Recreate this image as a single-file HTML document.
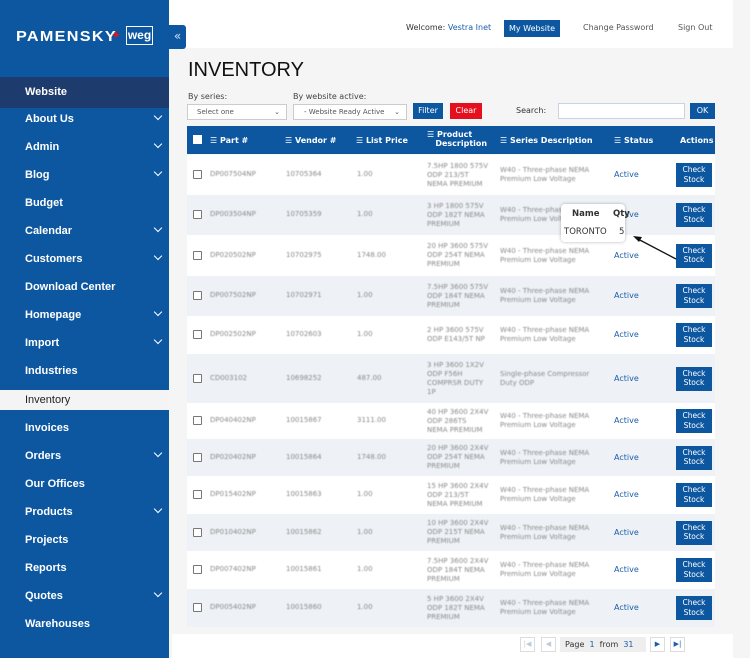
<!DOCTYPE html><html><head><style>
*{margin:0;padding:0;box-sizing:border-box}
body{width:750px;height:658px;overflow:hidden;background:#f5f5f5;font-family:"DejaVu Sans","Liberation Sans",sans-serif;font-size:8px;color:#333;position:relative}
.a{position:absolute}
#sb{left:0;top:0;width:169px;height:658px;background:#0d57a1}
.mi{position:absolute;left:25px;color:#fff;font-size:11px;font-weight:bold;font-family:"Liberation Sans",sans-serif}
.ch{position:absolute;left:155px;width:6px;height:6px;border-right:1.5px solid #fff;border-bottom:1.5px solid #fff;transform:rotate(45deg)}
.bl{color:#8a8a8a;filter:blur(0.6px);font-size:7px;line-height:9px}
.btn{background:#0d57a1;color:#fff;text-align:center}
.cb{position:absolute;left:193px;width:9px;height:9px;border:1px solid #777;background:#fff;border-radius:1px}
</style></head><body>
<div class="a" style="left:169px;top:0;width:564px;height:48px;background:#fff"></div>
<div class="a" style="left:172px;top:634px;width:561px;height:24px;background:#fff"></div>
<div id="sb" class="a">
<div class="a" style="left:16px;top:28px;color:#fff;font:900 15px 'Liberation Sans',sans-serif;letter-spacing:1.2px;transform:scaleX(1.08);transform-origin:left">PAMENSKY</div>
<div class="a" style="left:111px;top:28px;color:#e0141e;font-size:12px">✦</div>
<div class="a" style="left:126px;top:26px;width:27px;height:19px;border:1.5px solid #fff;color:#fff;font:bold 12px 'Liberation Sans';text-align:center;line-height:16px">weg</div>
<div class="a" style="left:0;top:77px;width:169px;height:31px;background:#1d3b6d"></div>
<div class="mi" style="top:86px">Website</div>
<div class="a" style="left:0;top:390px;width:169px;height:20px;background:#f4f4f4"></div>
</div>
<div class="a" style="left:169px;top:25px;width:17px;height:24px;background:#0d57a1;border-radius:0 3px 3px 0;color:#cfe0f2;font-size:12px;text-align:center;line-height:22px">«</div>
<div id="menu"></div>
<div class="a" style="left:406px;top:23px;font-size:8px;color:#333">Welcome: <span style="color:#1c5fa8">Vestra Inet</span></div>
<div class="a btn" style="left:504px;top:20px;width:56px;height:17px;line-height:17px;font-size:8px">My Website</div>
<div class="a" style="left:583px;top:23px;color:#555">Change Password</div>
<div class="a" style="left:678px;top:23px;color:#555">Sign Out</div>
<div class="a" style="left:188px;top:59px;font:20px 'Liberation Sans',sans-serif;color:#111">INVENTORY</div>
<div class="a" style="left:188px;top:92px;color:#444">By series:</div>
<div class="a" style="left:293px;top:92px;color:#444">By website active:</div>
<div class="a" style="left:187px;top:104px;width:100px;height:16px;background:#fff;border:1px solid #ccc;font-size:7px;padding:3px 0 0 9px;color:#555">Select one<span style="position:absolute;right:6px">⌄</span></div>
<div class="a" style="left:293px;top:104px;width:114px;height:16px;background:#fff;border:1px solid #ccc;font-size:7px;padding:3px 0 0 10px;color:#555">- Website Ready Active<span style="position:absolute;right:6px">⌄</span></div>
<div class="a btn" style="left:413px;top:103px;width:30px;height:16px;line-height:16px">Filter</div>
<div class="a" style="left:450px;top:103px;width:32px;height:16px;line-height:16px;background:#e4101e;color:#fff;text-align:center">Clear</div>
<div class="a" style="left:516px;top:106px;color:#333">Search:</div>
<div class="a" style="left:558px;top:103px;width:127px;height:16px;background:#fff;border:1px solid #c8d4e0"></div>
<div class="a btn" style="left:690px;top:103px;width:25px;height:16px;line-height:16px">OK</div>
<div class="a" style="left:187px;top:126px;width:528px;height:28px;background:#0d57a1;color:#fff;font-weight:bold;font-size:8px">
<div class="a" style="left:6px;top:9px;width:9px;height:9px;background:#fff"></div>
<div class="a" style="left:23px;top:10px">☰ Part #</div>
<div class="a" style="left:98px;top:10px">☰ Vendor #</div>
<div class="a" style="left:169px;top:10px">☰ List Price</div>
<div class="a" style="left:240px;top:4px;line-height:9px">☰ Product<br>&nbsp;&nbsp;&nbsp;Description</div>
<div class="a" style="left:313px;top:10px">☰ Series Description</div>
<div class="a" style="left:427px;top:10px">☰ Status</div>
<div class="a" style="left:493px;top:10px">Actions</div>
</div>
<div id="rows"></div>
<div class="a" style="left:520px;top:637px;width:15px;height:15px;border:1px solid #ddd;color:#bcd;text-align:center;line-height:13px;font-size:7px">|◀</div>
<div class="a" style="left:541px;top:637px;width:15px;height:15px;border:1px solid #ddd;color:#bcd;text-align:center;line-height:13px;font-size:7px">◀</div>
<div class="a" style="left:560px;top:637px;width:86px;height:15px;background:#eee;line-height:15px;padding-left:5px;color:#333">Page&nbsp;&nbsp;<span style="color:#1c5fa8">1</span>&nbsp;&nbsp;from&nbsp;&nbsp;<span style="color:#1c5fa8">31</span></div>
<div class="a" style="left:650px;top:637px;width:15px;height:15px;border:1px solid #ddd;color:#1c5fa8;text-align:center;line-height:13px;font-size:7px">▶</div>
<div class="a" style="left:670px;top:637px;width:15px;height:15px;border:1px solid #ddd;color:#1c5fa8;text-align:center;line-height:13px;font-size:7px">▶|</div>
<script>
var m=[["About Us",119,1],["Admin",147,1],["Blog",175,1],["Budget",203,0],["Calendar",231,1],["Customers",259,1],["Download Center",287,0],["Homepage",315,1],["Import",343,1],["Industries",371,0],["Inventory",400,0],["Invoices",428,0],["Orders",456,1],["Our Offices",484,0],["Products",512,1],["Projects",540,0],["Reports",568,0],["Quotes",596,1],["Warehouses",624,0]];
var h="";m.forEach(function(x){var c=x[0]=="Inventory"?"color:#222;font-weight:normal;":"";h+='<div class="mi" style="'+c+'top:'+(x[1]-6)+'px">'+x[0]+'</div>';if(x[2])h+='<div class="ch" style="top:'+(x[1]-6)+'px"></div>'});
document.getElementById("menu").innerHTML=h;
var r=[[155,40,"DP007504NP","10705364","1.00","7.5HP 1800 575V<br>ODP 213/5T<br>NEMA PREMIUM","W40 - Three-phase NEMA<br>Premium Low Voltage"],
[195,40,"DP003504NP","10705359","1.00","3 HP 1800 575V<br>ODP 182T NEMA<br>PREMIUM","W40 - Three-phase NEMA<br>Premium Low Voltage"],
[235,41,"DP020502NP","10702975","1748.00","20 HP 3600 575V<br>ODP 254T NEMA<br>PREMIUM","W40 - Three-phase NEMA<br>Premium Low Voltage"],
[276,40,"DP007502NP","10702971","1.00","7.5HP 3600 575V<br>ODP 184T NEMA<br>PREMIUM","W40 - Three-phase NEMA<br>Premium Low Voltage"],
[316,38,"DP002502NP","10702603","1.00","2 HP 3600 575V<br>ODP E143/5T NP","W40 - Three-phase NEMA<br>Premium Low Voltage"],
[354,49,"CD003102","10698252","487.00","3 HP 3600 1X2V<br>ODP F56H<br>COMPRSR DUTY<br>1P","Single-phase Compressor<br>Duty ODP"],
[403,36,"DP040402NP","10015867","3111.00","40 HP 3600 2X4V<br>ODP 286TS<br>NEMA PREMIUM","W40 - Three-phase NEMA<br>Premium Low Voltage"],
[439,37,"DP020402NP","10015864","1748.00","20 HP 3600 2X4V<br>ODP 254T NEMA<br>PREMIUM","W40 - Three-phase NEMA<br>Premium Low Voltage"],
[476,38,"DP015402NP","10015863","1.00","15 HP 3600 2X4V<br>ODP 213/5T<br>NEMA PREMIUM","W40 - Three-phase NEMA<br>Premium Low Voltage"],
[514,37,"DP010402NP","10015862","1.00","10 HP 3600 2X4V<br>ODP 215T NEMA<br>PREMIUM","W40 - Three-phase NEMA<br>Premium Low Voltage"],
[551,38,"DP007402NP","10015861","1.00","7.5HP 3600 2X4V<br>ODP 184T NEMA<br>PREMIUM","W40 - Three-phase NEMA<br>Premium Low Voltage"],
[589,38,"DP005402NP","10015860","1.00","5 HP 3600 2X4V<br>ODP 182T NEMA<br>PREMIUM","W40 - Three-phase NEMA<br>Premium Low Voltage"]];
h="";r.forEach(function(x,i){var t=x[0],hh=x[1],c=t+hh/2;var nl=x[5].split("<br>").length;
h+='<div class="a" style="left:187px;top:'+t+'px;width:528px;height:'+hh+'px;background:'+(i%2?'#eef2f6':'#fff')+'"></div>';
h+='<div class="cb" style="top:'+(c-5)+'px"></div>';
h+='<div class="a bl" style="left:210px;top:'+(c-5)+'px">'+x[2]+'</div>';
h+='<div class="a bl" style="left:286px;top:'+(c-5)+'px">'+x[3]+'</div>';
h+='<div class="a bl" style="left:357px;top:'+(c-5)+'px">'+x[4]+'</div>';
h+='<div class="a bl" style="left:427px;top:'+(c-nl*4.5)+'px">'+x[5]+'</div>';
h+='<div class="a bl" style="left:500px;top:'+(c-9)+'px">'+x[6]+'</div>';
h+='<div class="a" style="left:614px;top:'+(c-5)+'px;color:#1c5fa8">Active</div>';
h+='<div class="a btn" style="left:676px;top:'+(c-12)+'px;width:36px;height:24px;font-size:7.5px;line-height:9.5px;padding-top:2px">Check<br>Stock</div>';});
document.getElementById("rows").innerHTML=h;
</script>
<div class="a" style="left:561px;top:204px;width:64px;height:38px;background:#fff;border-radius:4px;box-shadow:0 0 3px rgba(0,0,0,.3);font-size:8.5px">
<div class="a" style="left:11px;top:5px;font-weight:bold;color:#333">Name</div><div class="a" style="left:52px;top:5px;font-weight:bold;color:#333">Qty</div>
<div class="a" style="left:3px;top:23px;color:#333">TORONTO</div><div class="a" style="left:58px;top:23px;color:#333">5</div></div>
<svg class="a" style="left:630px;top:234px" width="50" height="28"><line x1="46" y1="25" x2="6" y2="4" stroke="#111" stroke-width="1.3"/><polygon points="3,2 12,3 9,8" fill="#111"/></svg>
</body></html>
